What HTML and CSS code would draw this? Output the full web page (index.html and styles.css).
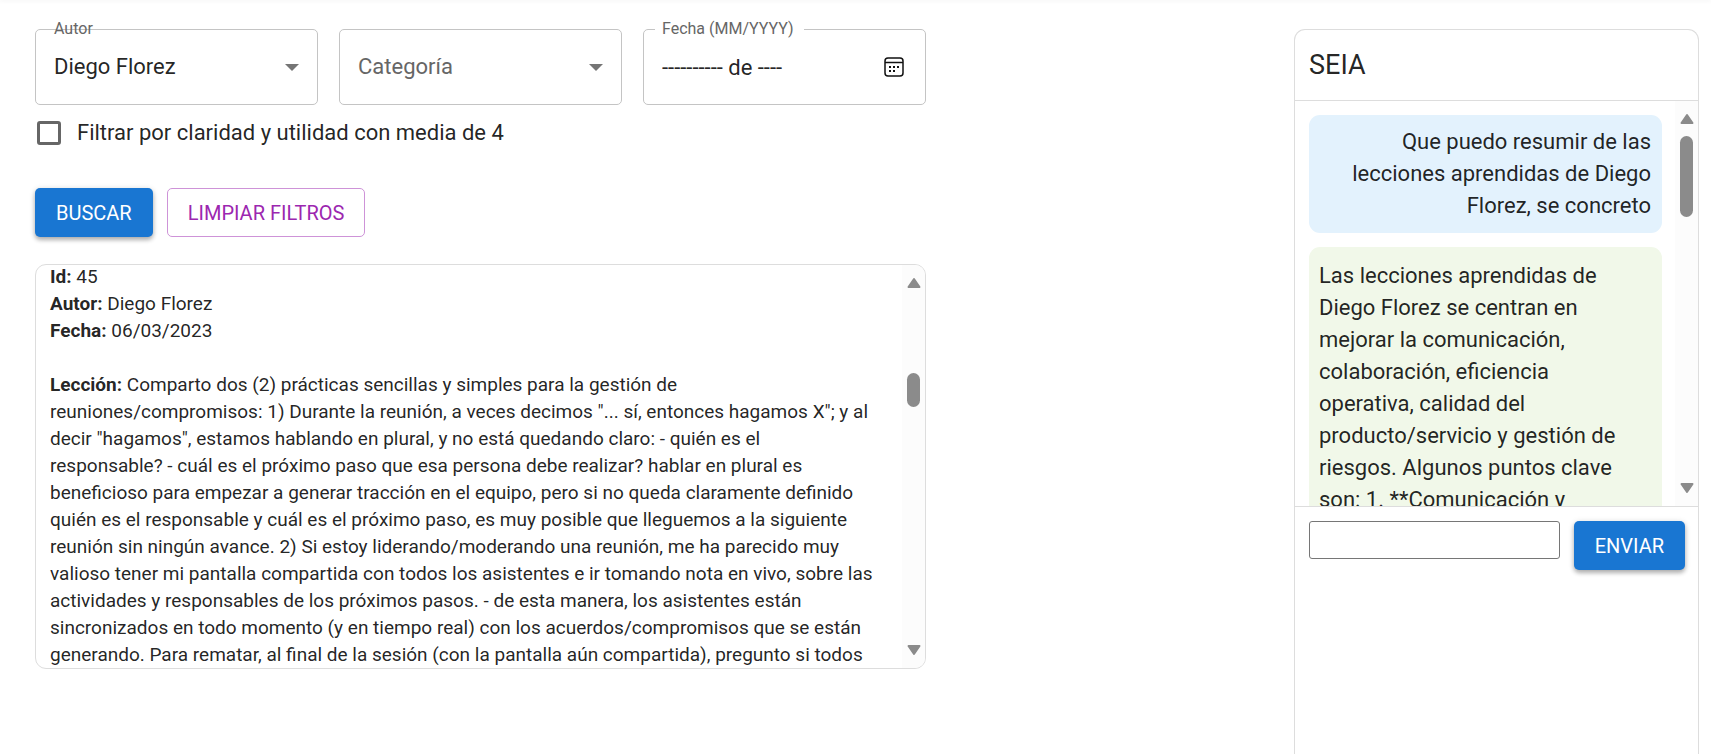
FILE: index.html
```html
<!DOCTYPE html>
<html lang="es">
<head>
<meta charset="utf-8">
<meta name="viewport" content="width=device-width, initial-scale=1">
<title>SEIA</title>
<link rel="stylesheet" href="styles.css">
</head>
<body>
<header class="topbar"></header>
<main class="layout">
  <section class="search">
    <form class="filters">
      <div class="fields">
        <div class="field">
          <label class="field-label" for="autor">Autor</label>
          <select class="control" id="autor"><option>Diego Florez</option></select>
          <svg class="caret" viewBox="0 0 14 7" aria-hidden="true"><path d="M0 0h14L7 7z"/></svg>
        </div>
        <div class="field">
          <select class="control control-empty" id="categoria" aria-label="Categoría"><option>Categoría</option></select>
          <svg class="caret" viewBox="0 0 14 7" aria-hidden="true"><path d="M0 0h14L7 7z"/></svg>
        </div>
        <div class="field">
          <label class="field-label field-label-notched" for="fecha">Fecha (MM/YYYY)</label>
          <input class="control" id="fecha" type="text" value="---------- de ----">
          <button class="calendar" type="button" aria-label="Abrir calendario">
            <svg viewBox="0 0 20 20" aria-hidden="true">
              <rect x="1" y="1" width="18" height="18" rx="3" fill="none" stroke="currentColor" stroke-width="1.5"/>
              <path d="M1 5.5h18" stroke="currentColor" stroke-width="1.5"/>
              <path d="M5 9h2v2H5zM9 9h2v2H9zM13 9h2v2h-2zM5 13h2v2H5zM9 13h2v2H9z" fill="currentColor"/>
            </svg>
          </button>
        </div>
      </div>
      <label class="check"><input class="check-box" type="checkbox">Filtrar por claridad y utilidad con media de 4</label>
      <div class="actions">
        <button class="btn btn-primary" type="button">BUSCAR</button>
        <button class="btn btn-outline" type="button">LIMPIAR FILTROS</button>
      </div>
    </form>
    <div class="results">
      <article class="lesson">
        <p><strong>Id:</strong> 45</p>
        <p><strong>Autor:</strong> Diego Florez</p>
        <p><strong>Fecha:</strong> 06/03/2023</p>
        <p class="lesson-text"><strong>Lección:</strong> Comparto dos (2) prácticas sencillas y simples para la gestión de<br>
          reuniones/compromisos: 1) Durante la reunión, a veces decimos "... sí, entonces hagamos X"; y al<br>
          decir "hagamos", estamos hablando en plural, y no está quedando claro: - quién es el<br>
          responsable? - cuál es el próximo paso que esa persona debe realizar? hablar en plural es<br>
          beneficioso para empezar a generar tracción en el equipo, pero si no queda claramente definido<br>
          quién es el responsable y cuál es el próximo paso, es muy posible que lleguemos a la siguiente<br>
          reunión sin ningún avance. 2) Si estoy liderando/moderando una reunión, me ha parecido muy<br>
          valioso tener mi pantalla compartida con todos los asistentes e ir tomando nota en vivo, sobre las<br>
          actividades y responsables de los próximos pasos. - de esta manera, los asistentes están<br>
          sincronizados en todo momento (y en tiempo real) con los acuerdos/compromisos que se están<br>
          generando. Para rematar, al final de la sesión (con la pantalla aún compartida), pregunto si todos</p>
      </article>
      <div class="scrollbar" aria-hidden="true">
        <svg class="arrow" viewBox="0 0 14 11"><path d="M7 1.5 12.5 9.5h-11z"/></svg>
        <div class="track"><div class="thumb thumb-results"></div></div>
        <svg class="arrow" viewBox="0 0 14 11"><path d="M7 9.5 1.5 1.5h11z"/></svg>
      </div>
    </div>
  </section>
  <aside class="chat">
    <h1 class="chat-title">SEIA</h1>
    <div class="chat-body">
      <div class="messages">
        <p class="message message-user">Que puedo resumir de las lecciones aprendidas de Diego Florez, se concreto</p>
        <p class="message message-bot">Las lecciones aprendidas de Diego Florez se centran en mejorar la comunicación, colaboración, eficiencia operativa, calidad del producto/servicio y gestión de riesgos. Algunos puntos clave son: 1. **Comunicación y</p>
      </div>
      <div class="scrollbar" aria-hidden="true">
        <svg class="arrow" viewBox="0 0 14 11"><path d="M7 1.5 12.5 9.5h-11z"/></svg>
        <div class="track"><div class="thumb thumb-chat"></div></div>
        <svg class="arrow" viewBox="0 0 14 11"><path d="M7 9.5 1.5 1.5h11z"/></svg>
      </div>
    </div>
    <form class="composer">
      <input class="composer-input" type="text" aria-label="Mensaje">
      <button class="btn btn-primary" type="button">ENVIAR</button>
    </form>
  </aside>
</main>
</body>
</html>
```
FILE: styles.css
```css
* { box-sizing: border-box; }

body {
  margin: 0;
  background: #fff;
  color: rgba(0, 0, 0, 0.87);
  font-family: Roboto, "Liberation Sans", sans-serif;
  font-size: 22px;
  line-height: 32px;
}

p, h1 { margin: 0; }

input, select, button { font: inherit; color: inherit; }

.topbar { box-shadow: 0 0 4px 1px rgba(0, 0, 0, 0.06); }

.layout {
  display: grid;
  grid-template-columns: minmax(0, 891fr) minmax(0, 368fr) minmax(0, 405fr);
  height: 100vh;
  padding: 29px 12px 0 35px;
  overflow: hidden;
}

/* Filters */
.fields {
  display: grid;
  grid-template-columns: repeat(3, minmax(0, 1fr));
  gap: 21px;
}

.field { position: relative; display: flex; }

.control {
  width: 100%;
  height: 76px;
  padding: 0 56px 0 18px;
  border: 1px solid #c4c4c4;
  border-radius: 5px;
  background: transparent;
  appearance: none;
  outline: none;
}

.control-empty { color: #666; }

.field-label {
  position: absolute;
  top: -12px;
  left: 19px;
  color: #666;
  font-size: 16px;
  line-height: 24px;
}

.field-label-notched {
  left: 12px;
  padding: 0 10px 0 7px;
  background: #fff;
}

.caret {
  position: absolute;
  top: 35px;
  right: 19px;
  width: 14px;
  height: 7px;
  fill: #757575;
  pointer-events: none;
}

.calendar {
  position: absolute;
  top: 28px;
  right: 22px;
  width: 20px;
  height: 20px;
  padding: 0;
  border: 0;
  background: none;
  color: #111;
}

.calendar svg { display: block; }

.check {
  display: flex;
  align-items: center;
  gap: 16px;
  padding: 12px 0 12px 2px;
}

.check-box {
  width: 24px;
  height: 24px;
  margin: 0;
  border: 3px solid #666;
  border-radius: 3px;
  appearance: none;
}

.actions {
  display: flex;
  gap: 14px;
  margin: 27px 0;
}

.btn {
  height: 49px;
  padding: 0 20px;
  border: 1px solid transparent;
  border-radius: 5px;
  font-size: 20px;
  font-weight: 400;
  line-height: 32px;
}

.btn-primary {
  background: #1976d2;
  color: #fff;
  box-shadow: 0 3px 4px rgba(0, 0, 0, 0.25), 0 1px 6px rgba(0, 0, 0, 0.14);
}

.btn-outline {
  border-color: #ce93d8;
  background: transparent;
  color: #9c27b0;
}

/* Results */
.results {
  display: flex;
  height: 405px;
  border: 1px solid #ddd;
  border-radius: 11px;
  overflow: hidden;
}

.lesson {
  display: flex;
  flex: 1;
  flex-direction: column;
  justify-content: flex-end;
  min-width: 0;
  padding: 0 14px;
  font-size: 19px;
  line-height: 27px;
}

.lesson-text { margin-top: 27px; }

/* Scrollbars */
.scrollbar {
  display: flex;
  flex: none;
  flex-direction: column;
  align-items: center;
  width: 23px;
  padding: 12px 0;
  background: #fcfcfc;
}

.arrow {
  width: 14px;
  height: 12px;
  fill: #8b8b8b;
  stroke: #8b8b8b;
  stroke-width: 2;
  stroke-linejoin: round;
}

.track { flex: 1; padding-top: 11px; }

.thumb {
  width: 13px;
  border-radius: 7px;
  background: #8b8b8b;
}

.thumb-results { height: 34px; margin-top: 73px; }
.thumb-chat { height: 81px; }

/* Chat */
.chat {
  display: flex;
  flex-direction: column;
  grid-column: 3;
  min-width: 0;
  border: 1px solid #ddd;
  border-bottom: 0;
  border-radius: 11px 11px 0 0;
}

.chat-title {
  padding: 14px;
  border-bottom: 1px solid #ddd;
  font-size: 27px;
  font-weight: 400;
  line-height: 42px;
}

.chat-body {
  display: flex;
  height: 406px;
  border-bottom: 1px solid #ddd;
}

.messages {
  display: flex;
  flex: 1;
  flex-direction: column;
  gap: 14px;
  min-width: 0;
  padding: 14px 13px 0 14px;
  overflow: hidden;
}

.message {
  flex: none;
  padding: 11px;
  border-radius: 11px;
}

.message-user { background: #e3f2fd; text-align: right; }

.message-bot {
  padding: 13px 16px 13px 10px;
  background: #f1f8e9;
}

.composer {
  display: flex;
  align-items: flex-start;
  gap: 14px;
  padding: 14px 13px 14px 14px;
}

.composer-input {
  flex: 1;
  min-width: 0;
  height: 38px;
  border: 1px solid #767676;
  border-radius: 3px;
  background: #fff;
}
```
